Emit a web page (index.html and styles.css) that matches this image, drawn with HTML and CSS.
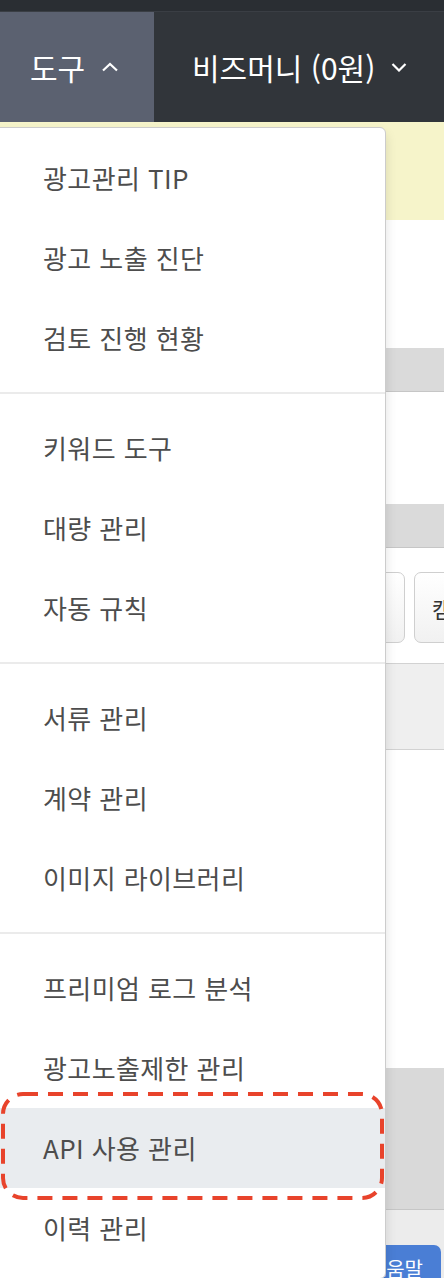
FILE: index.html
```html
<!DOCTYPE html>
<html lang="ko">
<head>
<meta charset="utf-8">
<title>도구 메뉴</title>
<link rel="stylesheet" href="styles.css">
</head>
<body>
<div class="page">
  <div class="topbar"></div>
  <nav class="gnb">
    <div class="gnb-item active">
      <span>도구</span>
      <svg class="chev" width="18" height="10" viewBox="0 0 18 10"><polyline points="2,8.5 9,2 16,8.5" fill="none" stroke="#fff" stroke-width="2.2"/></svg>
    </div>
    <div class="gnb-item">
      <span>비즈머니 (0원)</span>
      <svg class="chev" width="16" height="10" viewBox="0 0 16 10"><polyline points="1.5,2 8,8.5 14.5,2" fill="none" stroke="#fff" stroke-width="2.2"/></svg>
    </div>
  </nav>
  <main class="content">
    <div class="notice"></div>
    <div class="blank h128"></div>
    <div class="band"></div>
    <div class="blank h112"></div>
    <div class="band"></div>
    <div class="btn-row">
      <button class="btn w385"></button>
      <button class="btn w200">캠페인</button>
    </div>
    <div class="filter"></div>
    <div class="blank h318"></div>
    <div class="band tall"></div>
    <div class="footer-bar">
      <button class="help">도움말</button>
    </div>
  </main>

  <div class="dropdown">
    <a class="dd-item">광고관리 TIP</a>
    <a class="dd-item">광고 노출 진단</a>
    <a class="dd-item">검토 진행 현황</a>
    <div class="dd-divider"></div>
    <a class="dd-item">키워드 도구</a>
    <a class="dd-item">대량 관리</a>
    <a class="dd-item">자동 규칙</a>
    <div class="dd-divider"></div>
    <a class="dd-item">서류 관리</a>
    <a class="dd-item">계약 관리</a>
    <a class="dd-item">이미지 라이브러리</a>
    <div class="dd-divider"></div>
    <a class="dd-item">프리미엄 로그 분석</a>
    <a class="dd-item">광고노출제한 관리</a>
    <a class="dd-item hover">API 사용 관리</a>
    <a class="dd-item">이력 관리</a>
  </div>

  <svg class="annotation" width="384" height="108" viewBox="0 0 384 108">
    <rect x="2" y="2" width="379" height="104" rx="20" ry="20" fill="none" stroke="#e8432b" stroke-width="4" stroke-dasharray="15 10"/>
  </svg>
</div>
</body>
</html>
```

FILE: styles.css
```css
html, body {
  margin: 0;
  padding: 0;
  background: #ffffff;
}
body {
  font-family: "Noto Sans CJK KR", "Noto Sans", sans-serif;
}
.page {
  position: relative;
  width: 444px;
  height: 1278px;
  overflow: hidden;
}
.topbar {
  height: 12px;
  background: #2a2e33;
  border-bottom: 1px solid #3a3e44;
  box-sizing: border-box;
}
.gnb {
  display: flex;
  height: 110px;
  background: #31353a;
}
.gnb-item {
  display: flex;
  align-items: center;
  gap: 16px;
  color: #ffffff;
  font-size: 30px;
  white-space: nowrap;
  padding-left: 38px;
}
.gnb-item.active {
  width: 154px;
  box-sizing: border-box;
  padding-left: 30px;
  background: #5b6170;
}
.gnb-item span {
  line-height: 1;
}
.content {
  display: flex;
  flex-direction: column;
}
.notice {
  height: 98px;
  background: #f6f4ca;
}
.blank { background: #ffffff; }
.h128 { height: 128px; }
.h112 { height: 112px; }
.h318 { height: 318px; }
.band {
  height: 44px;
  background: #dadada;
  border-bottom: 1px solid #c6c6c6;
  box-sizing: border-box;
}
.band.tall {
  height: 142px;
  background: #d9d9d9;
}
.btn-row {
  height: 115px;
  display: flex;
  align-items: flex-start;
  gap: 9px;
  padding: 24px 0 0 20px;
  box-sizing: border-box;
  overflow: hidden;
  background: #ffffff;
}
.btn {
  flex: none;
  height: 71px;
  border: 1px solid #cfcfcf;
  border-radius: 7px;
  background: linear-gradient(#ffffff, #f1f1f1);
  font-family: inherit;
  font-size: 22px;
  color: #333333;
  text-align: left;
  padding: 0 0 0 17px;
}
.w385 { width: 385px; }
.w200 { width: 200px; }
.filter {
  height: 87px;
  background: #efefef;
  border-top: 1px solid #d2d2d2;
  border-bottom: 1px solid #d2d2d2;
  box-sizing: border-box;
}
.footer-bar {
  height: 80px;
  background: #ececec;
  display: flex;
  justify-content: flex-end;
  padding: 35px 3px 0 0;
  box-sizing: border-box;
}
.help {
  height: 60px;
  border: none;
  border-radius: 7px;
  background: #4a7ed5;
  color: #ffffff;
  font-family: inherit;
  font-size: 20px;
  padding: 14px 18px 0;
  align-self: flex-start;
  line-height: 1;
  display: flex;
  align-items: flex-start;
}
.dropdown {
  position: absolute;
  top: 127px;
  left: -8px;
  width: 394px;
  box-sizing: border-box;
  padding: 10px 0;
  background: #ffffff;
  border: 1px solid #cccccc;
  border-radius: 6px;
  box-shadow: 0 6px 12px rgba(0, 0, 0, 0.12);
}
.dd-item {
  display: block;
  height: 80px;
  line-height: 80px;
  padding-left: 50px;
  font-size: 26px;
  letter-spacing: 0.4px;
  color: #4d4d4d;
  white-space: nowrap;
}
.dd-item.hover {
  background: #e9ecef;
}
.dd-divider {
  height: 2px;
  margin: 14px 0;
  background: #ebebeb;
}
.annotation {
  position: absolute;
  left: 1px;
  top: 1092px;
}
```
